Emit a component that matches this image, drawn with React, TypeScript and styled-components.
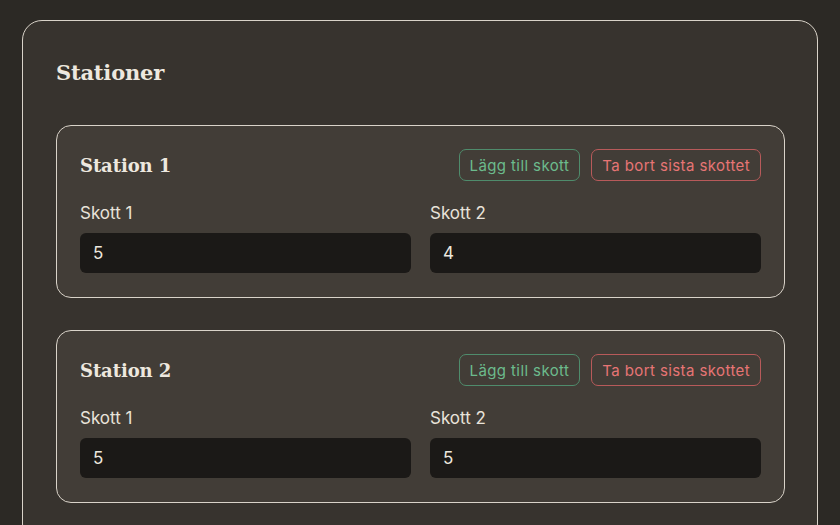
import React from "react";
import styled, { createGlobalStyle } from "styled-components";

const GlobalStyle = createGlobalStyle`
  html, body {
    margin: 0;
    padding: 0;
    background: #2c2925;
  }
  body {
    font-family: Inter, "Noto Sans", sans-serif;
    color: #ebe6de;
  }
`;

const Page = styled.div`
  padding: 20px 22px 0 22px;
  min-height: 100vh;
  box-sizing: border-box;
`;

const Panel = styled.section`
  background: #37332e;
  border: 1.5px solid #d9d3c9;
  border-radius: 20px;
  padding: 38px 32px 40px 33px;
  display: flex;
  flex-direction: column;
  gap: 32px;
`;

const Title = styled.h1`
  margin: 0 0 6px 0;
  font-family: "DejaVu Serif", "Liberation Serif", serif;
  font-weight: bold;
  font-size: 21px;
  line-height: 28px;
  color: #ede8df;
  letter-spacing: -0.2px;
`;

const StationCard = styled.div`
  background: #423d37;
  border: 1.5px solid #d9d3c9;
  border-radius: 15px;
  padding: 23px 23px 24px 23px;
`;

const CardHeader = styled.div`
  display: flex;
  align-items: center;
  justify-content: space-between;
  height: 32px;
`;

const StationTitle = styled.h2`
  margin: 0;
  font-family: "DejaVu Serif", "Liberation Serif", serif;
  font-weight: bold;
  font-size: 18px;
  color: #ede8df;
  letter-spacing: -0.1px;
`;

const Actions = styled.div`
  display: flex;
  gap: 11px;
`;

const ActionButton = styled.button<{ $tone: "add" | "remove" }>`
  height: 32px;
  padding: 0 10px;
  border-radius: 7px;
  background: transparent;
  font-family: Inter, "Noto Sans", sans-serif;
  font-size: 15px;
  letter-spacing: 0.4px;
  border: 1px solid ${(p) => (p.$tone === "add" ? "#4f8c6c" : "#b85a5a")};
  color: ${(p) => (p.$tone === "add" ? "#6cbb8d" : "#e77575")};
  cursor: pointer;
`;

const ShotGrid = styled.div`
  display: grid;
  grid-template-columns: 1fr 1fr;
  column-gap: 19px;
  margin-top: 20px;
`;

const Field = styled.label`
  display: flex;
  flex-direction: column;
  gap: 8px;
`;

const FieldLabel = styled.span`
  font-size: 17px;
  line-height: 24px;
  color: #e9e3da;
`;

const ShotInput = styled.input`
  height: 40px;
  box-sizing: border-box;
  background: #1b1917;
  border: none;
  border-radius: 6px;
  padding: 0 13px;
  font-family: Inter, "Noto Sans", sans-serif;
  font-size: 17px;
  color: #ede8df;
  outline: none;
`;

const stations = [
  { name: "Station 1", shots: [5, 4] },
  { name: "Station 2", shots: [5, 5] },
];

function App() {
  return (
    <Page>
      <GlobalStyle />
      <Panel>
        <Title>Stationer</Title>
        {stations.map((station) => (
          <StationCard key={station.name}>
            <CardHeader>
              <StationTitle>{station.name}</StationTitle>
              <Actions>
                <ActionButton $tone="add">Lägg till skott</ActionButton>
                <ActionButton $tone="remove">Ta bort sista skottet</ActionButton>
              </Actions>
            </CardHeader>
            <ShotGrid>
              {station.shots.map((shot, i) => (
                <Field key={i}>
                  <FieldLabel>Skott {i + 1}</FieldLabel>
                  <ShotInput defaultValue={shot} />
                </Field>
              ))}
            </ShotGrid>
          </StationCard>
        ))}
      </Panel>
    </Page>
  );
}

export default App;
